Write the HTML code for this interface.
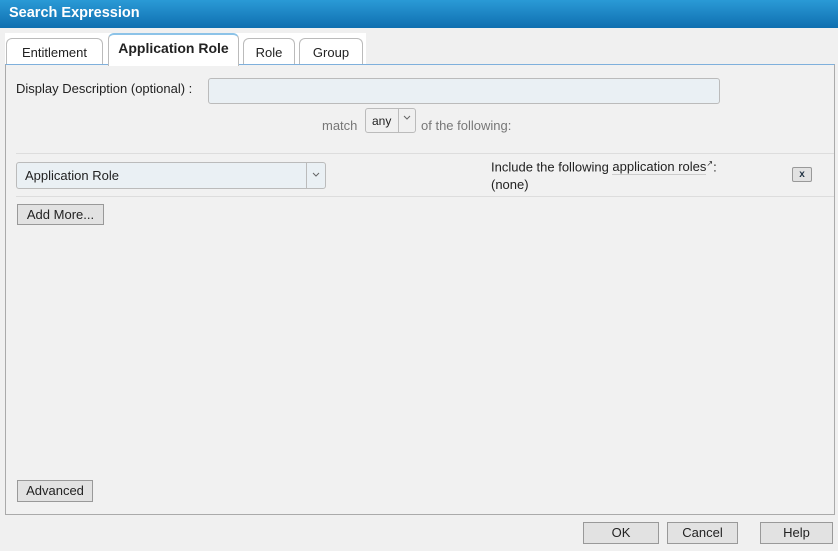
<!DOCTYPE html>
<html><head><meta charset="utf-8"><style>
*{box-sizing:border-box;margin:0;padding:0}
body{width:838px;height:551px;background:#f0f0f0;font-family:"Liberation Sans",sans-serif;font-size:13px;color:#222;position:relative;overflow:hidden}
.a{position:absolute}
.title{left:0;top:0;width:838px;height:28px;background:linear-gradient(#2a9ad6,#0f6fb0);color:#fff;font-weight:bold;font-size:14.5px;padding:5px 9px}
.tab{top:38px;height:27px;border:1px solid #bbb;border-bottom:none;border-radius:6px 6px 0 0;background:#fff;text-align:center;padding-top:6px;font-size:13px}
.panel{left:5px;top:64px;width:830px;height:451px;border:1px solid #aaa;border-top:1px solid #7fb0dc;background:#f1f1f1}
.inp{border:1px solid #bbb;border-radius:3px;background:#eaf0f4}
.btn{border:1px solid #999;background:#e2e2e2;text-align:center;font-size:13px}
.hr{height:1px;background:#ddd}
</style></head><body>
<div class="a title">Search Expression</div>
<div class="a" style="left:5px;top:33px;width:361px;height:32px;background:#fff"></div>
<div class="a tab" style="left:6px;width:97px">Entitlement</div>
<div class="a tab" style="left:108px;top:33px;height:33px;width:131px;border-top:2px solid #8cc3e8;font-weight:bold;font-size:14px;padding-top:5px;z-index:2">Application Role</div>
<div class="a tab" style="left:243px;width:52px">Role</div>
<div class="a tab" style="left:299px;width:64px">Group</div>
<div class="a panel"></div>
<div class="a" style="left:16px;top:81px">Display Description (optional) :</div>
<div class="a inp" style="left:208px;top:78px;width:512px;height:26px"></div>
<div class="a" style="left:322px;top:118px;color:#777">match</div>
<div class="a inp" style="left:365px;top:108px;width:51px;height:25px;background:#f0f0f0"></div>
<div class="a" style="left:372px;top:114px;font-size:12px">any</div>
<div class="a" style="left:398px;top:108px;width:1px;height:25px;background:#bbb"></div>
<svg class="a" style="left:403px;top:115px" width="8" height="6"><path d="M1 1L4 4L7 1" stroke="#666" fill="none"/></svg>
<div class="a" style="left:421px;top:118px;color:#777">of the following:</div>
<div class="a hr" style="left:16px;top:153px;width:818px"></div>
<div class="a inp" style="left:16px;top:162px;width:310px;height:27px"></div>
<div class="a" style="left:25px;top:168px">Application Role</div>
<div class="a" style="left:306px;top:162px;width:1px;height:27px;background:#bbb"></div>
<svg class="a" style="left:312px;top:172px" width="8" height="6"><path d="M1 1L4 4L7 1" stroke="#666" fill="none"/></svg>
<div class="a" style="left:491px;top:159px">Include the following <span style="border-bottom:1px solid #ccc">application roles</span><sup style="font-size:8px">&#8599;</sup>:</div>
<div class="a" style="left:491px;top:177px">(none)</div>
<div class="a btn" style="left:792px;top:167px;width:20px;height:15px;font-size:10px;font-weight:bold;color:#234;line-height:13px;border-radius:2px">x</div>
<div class="a hr" style="left:16px;top:196px;width:818px"></div>
<div class="a btn" style="left:17px;top:204px;width:87px;height:21px;line-height:19px">Add More...</div>
<div class="a btn" style="left:17px;top:480px;width:76px;height:22px;line-height:20px">Advanced</div>
<div class="a btn" style="left:583px;top:522px;width:76px;height:22px;line-height:20px">OK</div>
<div class="a btn" style="left:667px;top:522px;width:71px;height:22px;line-height:20px">Cancel</div>
<div class="a btn" style="left:760px;top:522px;width:73px;height:22px;line-height:20px">Help</div>
</body></html>
